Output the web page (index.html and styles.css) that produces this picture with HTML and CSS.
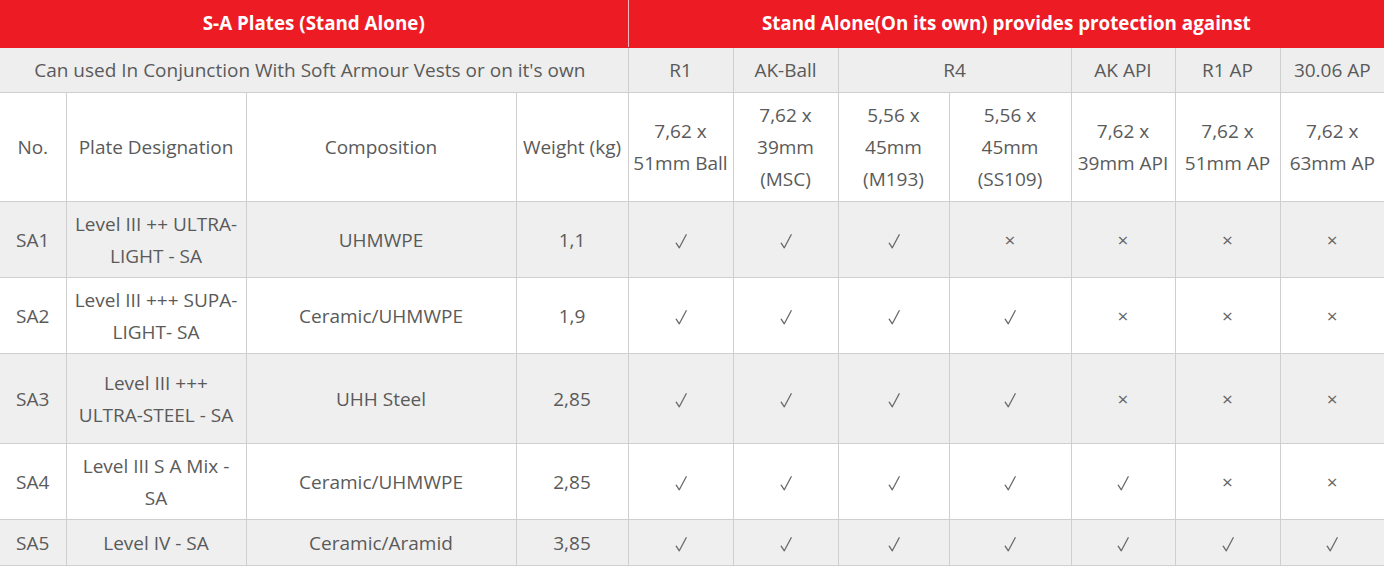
FILE: index.html
```html
<!DOCTYPE html>
<html lang="en">
<head>
<meta charset="utf-8">
<title>S-A Plates</title>
<link rel="stylesheet" href="styles.css">
</head>
<body>
<svg class="defs" width="0" height="0" aria-hidden="true">
  <symbol id="tick" viewBox="0 0 12 15">
    <path d="M1.2 9.2 L4.3 13.8 L11.2 0.8" fill="none" stroke="currentColor" stroke-width="1.3" stroke-linecap="round" stroke-linejoin="round"/>
  </symbol>
</svg>
<table class="spec">
  <colgroup>
    <col class="c-no"><col class="c-des"><col class="c-comp"><col class="c-wt">
    <col class="c-a"><col class="c-b"><col class="c-c"><col class="c-d"><col class="c-e"><col class="c-f"><col class="c-g">
  </colgroup>
  <thead>
    <tr class="head-red">
      <th colspan="4">S-A Plates (Stand Alone)</th>
      <th colspan="7">Stand Alone(On its own) provides protection against</th>
    </tr>
    <tr class="head-grey">
      <td colspan="4" class="intro">Can used In Conjunction With Soft Armour Vests or on it's own</td>
      <td>R1</td>
      <td>AK-Ball</td>
      <td colspan="2">R4</td>
      <td>AK API</td>
      <td>R1 AP</td>
      <td>30.06 AP</td>
    </tr>
    <tr class="head-white">
      <td>No.</td>
      <td>Plate Designation</td>
      <td>Composition</td>
      <td>Weight (kg)</td>
      <td>7,62 x<br>51mm Ball</td>
      <td>7,62 x<br>39mm<br>(MSC)</td>
      <td>5,56 x<br>45mm<br>(M193)</td>
      <td>5,56 x<br>45mm<br>(SS109)</td>
      <td>7,62 x<br>39mm API</td>
      <td>7,62 x<br>51mm AP</td>
      <td>7,62 x<br>63mm AP</td>
    </tr>
  </thead>
  <tbody>
    <tr class="odd">
      <td>SA1</td><td>Level III ++ ULTRA-<br>LIGHT - SA</td><td>UHMWPE</td><td>1,1</td>
      <td class="m"><svg class="tick"><use href="#tick"/></svg></td>
      <td class="m"><svg class="tick"><use href="#tick"/></svg></td>
      <td class="m"><svg class="tick"><use href="#tick"/></svg></td>
      <td class="m x">×</td><td class="m x">×</td><td class="m x">×</td><td class="m x">×</td>
    </tr>
    <tr>
      <td>SA2</td><td>Level III +++ SUPA-<br>LIGHT- SA</td><td>Ceramic/UHMWPE</td><td>1,9</td>
      <td class="m"><svg class="tick"><use href="#tick"/></svg></td>
      <td class="m"><svg class="tick"><use href="#tick"/></svg></td>
      <td class="m"><svg class="tick"><use href="#tick"/></svg></td>
      <td class="m"><svg class="tick"><use href="#tick"/></svg></td>
      <td class="m x">×</td><td class="m x">×</td><td class="m x">×</td>
    </tr>
    <tr class="odd tall">
      <td>SA3</td><td>Level III +++<br>ULTRA-STEEL - SA</td><td>UHH Steel</td><td>2,85</td>
      <td class="m"><svg class="tick"><use href="#tick"/></svg></td>
      <td class="m"><svg class="tick"><use href="#tick"/></svg></td>
      <td class="m"><svg class="tick"><use href="#tick"/></svg></td>
      <td class="m"><svg class="tick"><use href="#tick"/></svg></td>
      <td class="m x">×</td><td class="m x">×</td><td class="m x">×</td>
    </tr>
    <tr>
      <td>SA4</td><td>Level III S A Mix -<br>SA</td><td>Ceramic/UHMWPE</td><td>2,85</td>
      <td class="m"><svg class="tick"><use href="#tick"/></svg></td>
      <td class="m"><svg class="tick"><use href="#tick"/></svg></td>
      <td class="m"><svg class="tick"><use href="#tick"/></svg></td>
      <td class="m"><svg class="tick"><use href="#tick"/></svg></td>
      <td class="m"><svg class="tick"><use href="#tick"/></svg></td>
      <td class="m x">×</td><td class="m x">×</td>
    </tr>
    <tr class="odd last">
      <td>SA5</td><td>Level IV - SA</td><td>Ceramic/Aramid</td><td>3,85</td>
      <td class="m"><svg class="tick"><use href="#tick"/></svg></td>
      <td class="m"><svg class="tick"><use href="#tick"/></svg></td>
      <td class="m"><svg class="tick"><use href="#tick"/></svg></td>
      <td class="m"><svg class="tick"><use href="#tick"/></svg></td>
      <td class="m"><svg class="tick"><use href="#tick"/></svg></td>
      <td class="m"><svg class="tick"><use href="#tick"/></svg></td>
      <td class="m"><svg class="tick"><use href="#tick"/></svg></td>
    </tr>
  </tbody>
</table>
</body>
</html>
```
FILE: styles.css
```css
html, body {
  margin: 0;
  padding: 0;
  background: #ffffff;
}
body {
  font-family: "Open Sans", "Liberation Sans", sans-serif;
  font-size: 19px;
  color: #5a5a5a;
}
.defs {
  position: absolute;
  width: 0;
  height: 0;
  overflow: hidden;
}
.spec {
  width: 1384px;
  border-collapse: collapse;
  table-layout: fixed;
}
.c-no { width: 66px; }
.c-des { width: 180px; }
.c-comp { width: 270px; }
.c-wt { width: 112px; }
.c-a { width: 105px; }
.c-b { width: 105px; }
.c-c { width: 111px; }
.c-d { width: 122px; }
.c-e { width: 104px; }
.c-f { width: 105px; }
.c-g { width: 104px; }

.spec th,
.spec td {
  border: 1px solid #cfcfcf;
  padding: 6px 3px;
  line-height: 32px;
  text-align: center;
  vertical-align: middle;
  font-weight: 400;
}
.spec tbody td {
  padding-top: 5.5px;
  padding-bottom: 5.5px;
}
.spec tr > :first-child { border-left: none; }
.spec tr > :last-child { border-right: none; }
.spec thead tr:first-child > * { border-top: none; }

.head-red th {
  background: #ed1c24;
  color: #ffffff;
  font-weight: 700;
  font-size: 18.8px;
  line-height: 32px;
  padding: 7px 3px 8px;
  border-color: #ed1c24;
  border-right: 1px solid #f6b9bb;
}
.head-red th:last-child { border-right: none; }
.head-grey td { background: #eeeeee; }
.head-grey td.intro { padding-right: 11px; }
.head-white td { background: #ffffff; }
tbody tr { background: #ffffff; }
tbody tr.odd { background: #efefef; }
tbody tr.tall { height: 90px; }
tbody tr.last { height: 46px; }
.m { color: #666666; }
.m.x { font-size: 19px; }
.tick {
  display: inline-block;
  width: 12px;
  height: 15px;
  vertical-align: middle;
  color: #6a6a6a;
}
```
